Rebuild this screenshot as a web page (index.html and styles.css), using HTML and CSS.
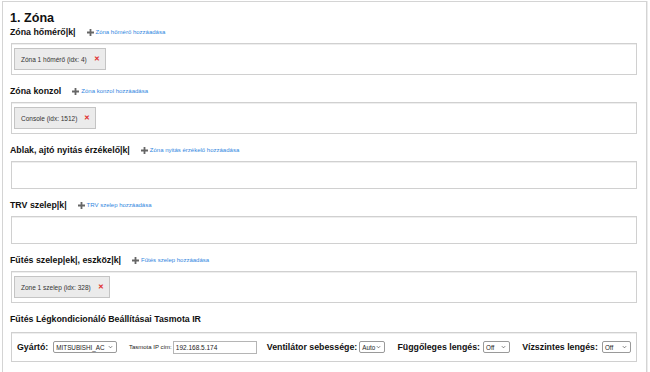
FILE: index.html
```html
<!DOCTYPE html>
<html lang="hu">
<head>
<meta charset="utf-8">
<title>1. Zóna</title>
<link rel="stylesheet" href="styles.css">
</head>
<body>
<div class="panel">
  <h1 class="title">1. Zóna</h1>

  <div class="row first">
    <span class="label">Zóna hőmérő|k|</span>
    <a class="add" href="#"><svg class="plus" viewBox="0 0 7 7"><path d="M3.5 0V7M0 3.5H7"/></svg>Zóna hőmérő hozzáadása</a>
  </div>
  <div class="box">
    <span class="chip">Zóna 1 hőmérő (idx: 4)<span class="x">✕</span></span>
  </div>

  <div class="row">
    <span class="label">Zóna konzol</span>
    <a class="add" href="#"><svg class="plus" viewBox="0 0 7 7"><path d="M3.5 0V7M0 3.5H7"/></svg>Zóna konzol hozzáadása</a>
  </div>
  <div class="box">
    <span class="chip">Console (idx: 1512)<span class="x">✕</span></span>
  </div>

  <div class="row">
    <span class="label">Ablak, ajtó nyitás érzékelő|k|</span>
    <a class="add" href="#"><svg class="plus" viewBox="0 0 7 7"><path d="M3.5 0V7M0 3.5H7"/></svg>Zóna nyitás érzékelő hozzáadása</a>
  </div>
  <div class="box"></div>

  <div class="row">
    <span class="label">TRV szelep|k|</span>
    <a class="add" href="#"><svg class="plus" viewBox="0 0 7 7"><path d="M3.5 0V7M0 3.5H7"/></svg>TRV szelep hozzáadása</a>
  </div>
  <div class="box"></div>

  <div class="row">
    <span class="label">Fűtés szelep|ek|, eszköz|k|</span>
    <a class="add" href="#"><svg class="plus" viewBox="0 0 7 7"><path d="M3.5 0V7M0 3.5H7"/></svg>Fűtés szelep hozzáadása</a>
  </div>
  <div class="box">
    <span class="chip">Zone 1 szelep (idx: 328)<span class="x">✕</span></span>
  </div>

  <div class="row ac">
    <span class="label">Fűtés Légkondicionáló Beállításai Tasmota IR</span>
  </div>
  <div class="box settings">
    <span class="label">Gyártó:</span>
    <span class="sel sel-brand"><span class="val">MITSUBISHI_AC</span><svg class="chev" viewBox="0 0 6 4"><path d="M1 1L3 3L5 1"/></svg></span>
    <span class="small">Tasmota IP cím:</span>
    <input class="ip" type="text" value="192.168.5.174">
    <span class="label">Ventilátor sebessége:</span>
    <span class="sel sel-auto"><span class="val">Auto</span><svg class="chev" viewBox="0 0 6 4"><path d="M1 1L3 3L5 1"/></svg></span>
    <span class="label">Függőleges lengés:</span>
    <span class="sel sel-off"><span class="val">Off</span><svg class="chev" viewBox="0 0 6 4"><path d="M1 1L3 3L5 1"/></svg></span>
    <span class="label">Vízszintes lengés:</span>
    <span class="sel sel-off2"><span class="val">Off</span><svg class="chev" viewBox="0 0 6 4"><path d="M1 1L3 3L5 1"/></svg></span>
  </div>
</div>
</body>
</html>
```

FILE: styles.css
```css
html, body {
  margin: 0;
  padding: 0;
  background: #ffffff;
  font-family: "Liberation Sans", Arial, sans-serif;
  color: #111;
}

.panel {
  box-sizing: border-box;
  margin: 1px 3px 0 2px;
  border: 1px solid #d4d4d4;
  border-bottom: none;
  padding: 9px 9px 0 7px;
  box-shadow: 1px 0 0 #ececec;
  min-height: calc(100vh - 1px);
}

.title {
  margin: 0 0 1px 0;
  font-size: 12.6px;
  line-height: 14px;
  font-weight: bold;
  color: #111;
}

.row {
  display: flex;
  align-items: center;
  height: 12px;
  margin: 10px 0 5px 0;
}

.row.first {
  margin-top: 0;
}

.row.ac {
  margin-bottom: 7px;
}

.label {
  font-size: 8.8px;
  font-weight: bold;
  line-height: 12px;
  color: #111;
  white-space: nowrap;
}

.add {
  display: flex;
  align-items: center;
  margin-left: 11px;
  font-size: 6px;
  color: #2f86e0;
  text-decoration: none;
  white-space: nowrap;
}

.plus {
  width: 7px;
  height: 7px;
  margin-right: 2px;
  stroke: #666;
  stroke-width: 1.8;
  fill: none;
}

.box {
  box-sizing: border-box;
  margin-left: 1px;
  min-height: 28px;
  border: 1px solid #d0d0d0;
  box-shadow: inset 0 1px 0 #eeeeee;
  padding: 4px 2px;
  display: flex;
  align-items: center;
}

.chip {
  display: inline-flex;
  align-items: center;
  box-sizing: border-box;
  height: 22px;
  padding: 0 5px 0 6px;
  background: #ebebeb;
  border: 1px solid #c4c4c4;
  font-size: 6.5px;
  color: #333;
  white-space: nowrap;
}

.x {
  margin-left: 7px;
  color: #e0302e;
  font-size: 7px;
  font-weight: bold;
}

.settings {
  min-height: 30px;
  padding: 0 5px;
}

.sel {
  box-sizing: border-box;
  display: inline-flex;
  align-items: center;
  justify-content: space-between;
  height: 12px;
  padding: 0 3px 0 2px;
  font-size: 6.3px;
  color: #222;
  border: 1px solid #9a9a9a;
  border-radius: 2px;
  background: #fff;
  white-space: nowrap;
}

.chev {
  width: 5px;
  height: 4px;
  stroke: #555;
  stroke-width: 0.9;
  fill: none;
}

.sel-brand { width: 66px; margin-left: 5px; }
.sel-auto { width: 27px; margin-left: 2px; }
.sel-off { width: 28px; margin-left: 3px; }
.sel-off2 { width: 30px; margin-left: 4px; }

.small {
  margin-left: 12px;
  font-size: 6px;
  color: #222;
  white-space: nowrap;
}

.ip {
  box-sizing: border-box;
  width: 84px;
  height: 13px;
  margin: 0 10px 0 1px;
  padding: 0 2px;
  border: 1px solid #b5b5b5;
  font-family: "Liberation Sans", Arial, sans-serif;
  font-size: 6.5px;
  color: #222;
}

.sel-auto + .label,
.sel-off + .label {
  margin-left: 12px;
}
```
